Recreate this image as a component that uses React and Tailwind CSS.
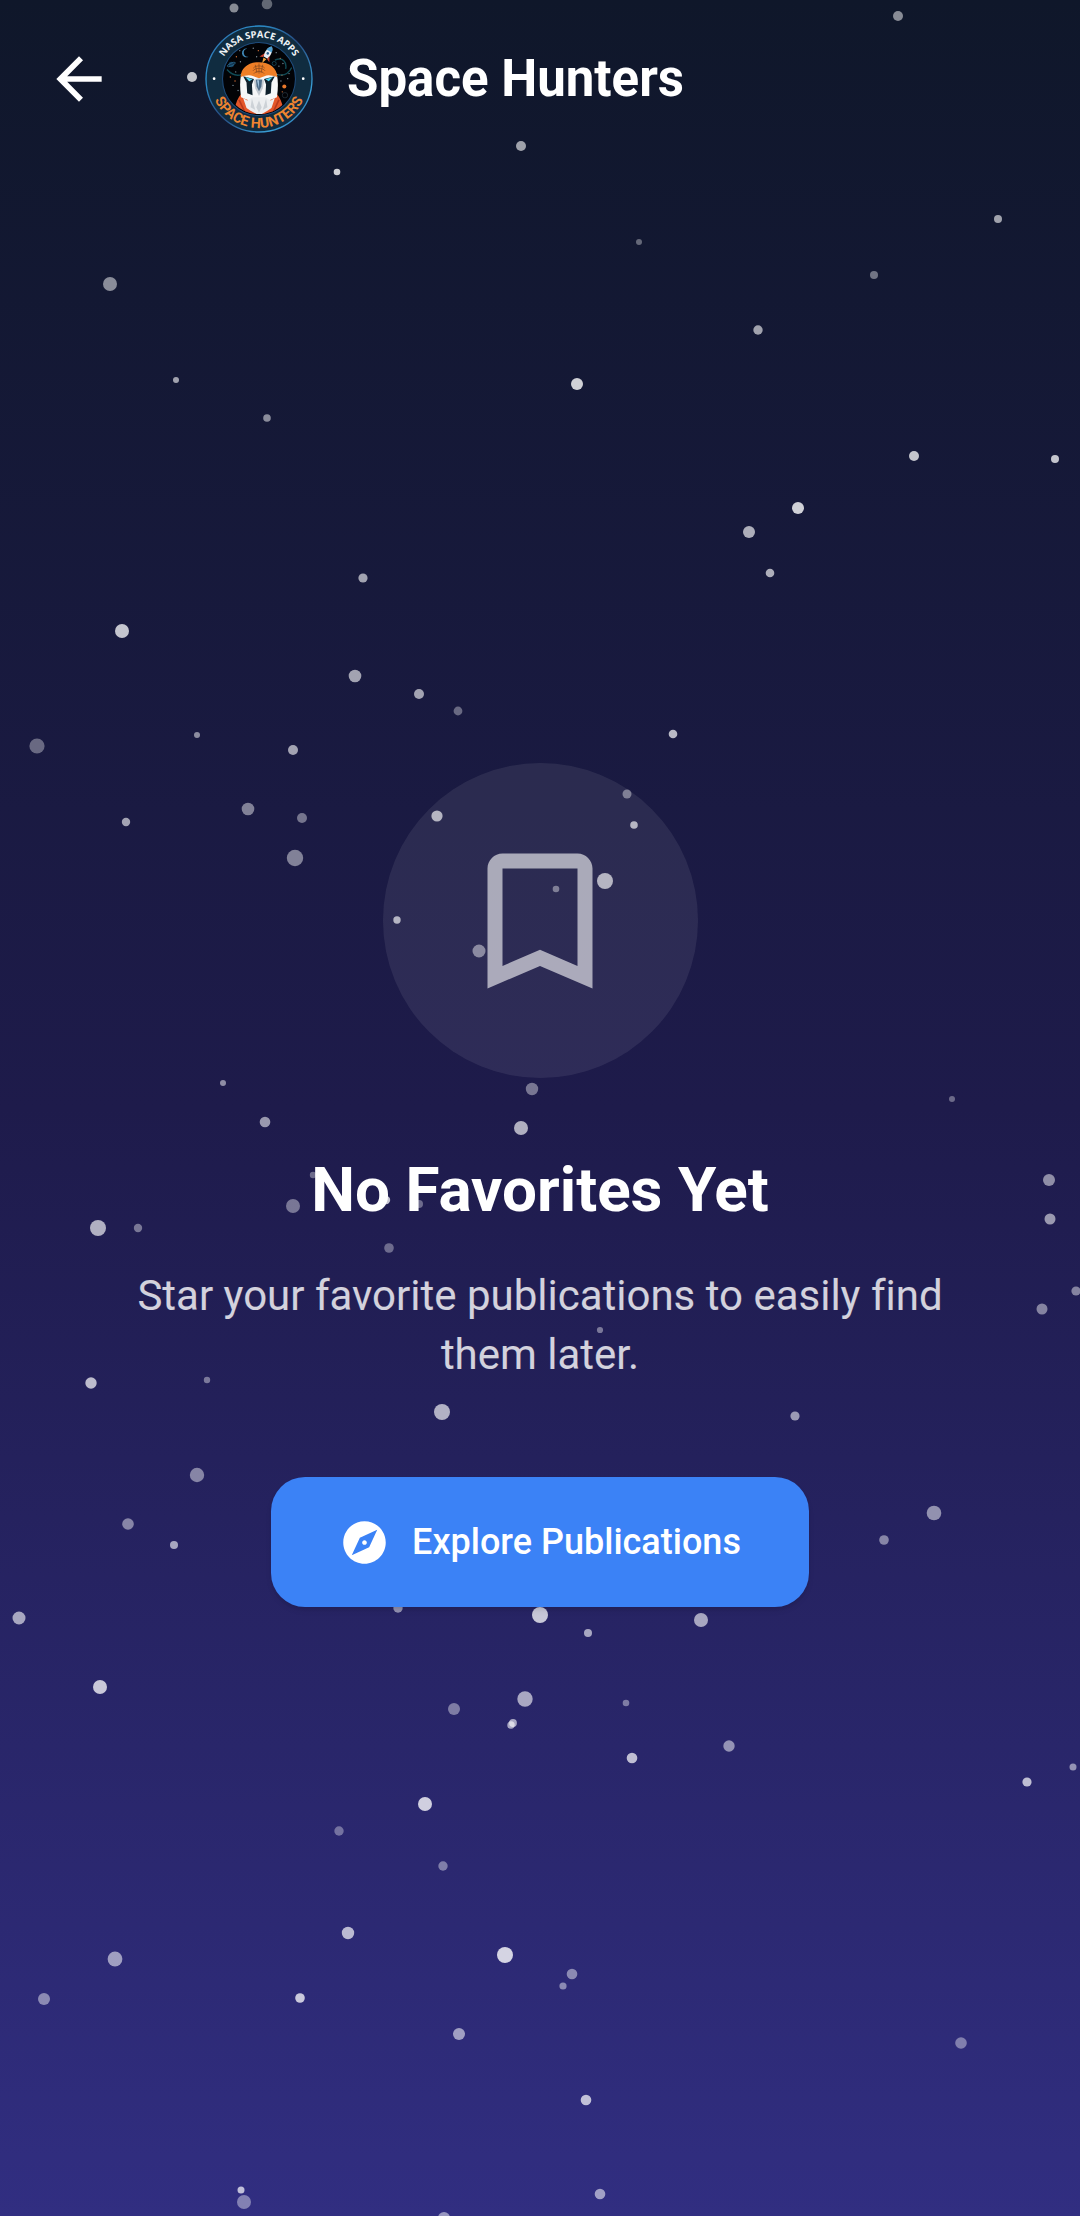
import React from "react";

// Star data: [x, y, radius, opacity] on a 1080 x 2216 sky.
const STARS = [
  [898, 16, 5, 0.5], [998, 219, 4, 0.6], [639, 242, 3, 0.35], [874, 275, 4, 0.4],
  [758, 330, 4.7, 0.6], [577, 384, 6, 0.8], [914, 456, 5, 0.75], [1055, 459, 4, 0.75],
  [798, 508, 6, 0.8], [749, 532, 6, 0.65], [770, 573, 4.3, 0.65], [673, 734, 4.3, 0.7],
  [234, 8, 4.5, 0.5], [267, 4, 5.3, 0.35], [192, 77, 5, 0.75], [337, 172, 3.3, 0.8],
  [521, 146, 5, 0.6], [110, 284, 7, 0.5], [176, 380, 3, 0.6], [267, 418, 3.8, 0.5],
  [363, 578, 4.6, 0.6], [122, 631, 7, 0.75], [355, 676, 6.3, 0.6], [419, 694, 5, 0.6],
  [458, 711, 4.4, 0.35], [197, 735, 3, 0.5], [37, 746, 7.6, 0.35], [293, 750, 5, 0.6],
  [248, 809, 6.3, 0.45], [302, 818, 5, 0.4], [126, 822, 4.2, 0.6], [437, 816, 5.6, 0.65],
  [295, 858, 8.2, 0.45], [627, 794, 4.5, 0.4], [634, 825, 3.8, 0.65], [605, 881, 8, 0.65],
  [556, 889, 3.3, 0.4], [397, 920, 3.7, 0.65], [479, 951, 6.5, 0.45], [532, 1089, 6.2, 0.4],
  [521, 1128, 7, 0.65], [223, 1083, 3, 0.5], [265, 1122, 5.3, 0.55], [313, 1175, 3.2, 0.35],
  [293, 1206, 7, 0.4], [386, 1200, 4.2, 0.75], [419, 1204, 4, 0.35], [98, 1228, 8, 0.65],
  [138, 1228, 4.2, 0.4], [389, 1248, 4.8, 0.35], [91, 1383, 5.7, 0.7], [207, 1380, 3.2, 0.4],
  [442, 1412, 8, 0.65], [197, 1475, 7.2, 0.45], [128, 1524, 5.8, 0.45], [174, 1545, 4, 0.6],
  [19, 1618, 6.5, 0.6], [398, 1608, 4.7, 0.5], [540, 1615, 8, 0.75], [701, 1620, 7, 0.6],
  [588, 1633, 4, 0.6], [952, 1099, 3, 0.35], [1049, 1180, 6, 0.5], [1050, 1219, 5.5, 0.55],
  [1076, 1291, 4.6, 0.45], [1042, 1309, 5.5, 0.45], [600, 1330, 3.1, 0.4], [795, 1416, 4.6, 0.55],
  [934, 1513, 7.3, 0.5], [884, 1540, 4.8, 0.45], [100, 1687, 7, 0.75], [454, 1709, 6, 0.4],
  [525, 1699, 7.7, 0.6], [513, 1723, 3.9, 0.6], [511, 1725, 3.7, 0.6], [425, 1804, 7, 0.78],
  [339, 1831, 4.7, 0.35], [443, 1866, 4.7, 0.4], [348, 1933, 6.2, 0.68], [115, 1959, 7.4, 0.55],
  [505, 1955, 8, 0.8], [44, 1999, 6, 0.45], [300, 1998, 4.8, 0.75], [459, 2034, 6, 0.55],
  [241, 2190, 3.5, 0.7], [244, 2202, 7, 0.4], [444, 2218, 6, 0.5], [626, 1703, 3.3, 0.4],
  [729, 1746, 5.7, 0.5], [632, 1758, 5.3, 0.7], [1073, 1767, 3.5, 0.5], [1027, 1782, 4.6, 0.7],
  [572, 1974, 5.3, 0.45], [563, 1986, 3.6, 0.45], [961, 2043, 5.8, 0.4], [586, 2100, 5.3, 0.7],
  [600, 2194, 5.3, 0.55],
];

function Starfield() {
  return (
    <svg
      aria-hidden="true"
      viewBox="0 0 1080 2216"
      preserveAspectRatio="xMidYMid slice"
      className="pointer-events-none absolute inset-0 h-full w-full"
    >
      {STARS.map(([x, y, r, o]) => (
        <circle key={`${x}-${y}`} cx={x} cy={y} r={r} fill="#fff" fillOpacity={o} />
      ))}
    </svg>
  );
}

const DUST = [
  [140, 140], [150, 122], [190, 115], [205, 122], [200, 140], [258, 128], [270, 145],
  [278, 160], [138, 185], [122, 200], [130, 225], [145, 240], [275, 195], [272, 212],
  [292, 205], [276, 244], [152, 155], [266, 168], [136, 212], [296, 190],
];

function TeamLogo({ className }) {
  return (
    <svg role="img" aria-label="Space Hunters team badge" viewBox="47 46 320 320" className={className}>
      <defs>
        <linearGradient id="rim" x1="0" y1="0" x2="1" y2="1">
          <stop offset="0" stopColor="#2f5f9e" />
          <stop offset="0.25" stopColor="#2c8fcb" />
          <stop offset="0.5" stopColor="#264a80" />
          <stop offset="0.8" stopColor="#3aa0d8" />
          <stop offset="1" stopColor="#274f8a" />
        </linearGradient>
        <clipPath id="porthole">
          <circle cx="207" cy="206" r="104" />
        </clipPath>
        <path id="arcTop" d="M 84 206 A 123 123 0 0 1 330 206" />
        <path id="arcBottom" d="M 62 206 A 145 145 0 0 0 352 206" />
      </defs>
      <circle cx="207" cy="206" r="157" fill="#102c40" stroke="url(#rim)" strokeWidth="4" />
      <circle cx="207" cy="206" r="108" fill="#020306" stroke="#1f4c7c" strokeWidth="3" />
      <g clipPath="url(#porthole)">
        {DUST.map(([x, y], i) => (
          <circle key={i} cx={x} cy={y} r="2" fill={i % 3 === 0 ? "#d9743a" : "#7d8f9c"} />
        ))}
        <path d="M172 116a13 13 0 1 0 4 24a12 12 0 0 1-4-24z" fill="#3f87b5" />
        <circle cx="125" cy="163" r="8" fill="#123a56" />
        <ellipse cx="125" cy="163" rx="13" ry="4" fill="none" stroke="#2f6f98" strokeWidth="2" transform="rotate(-25 125 163)" />
        <circle cx="252" cy="160" r="6" fill="none" stroke="#1f5a6b" strokeWidth="2" />
        <circle cx="282" cy="228" r="6" fill="#e9792b" />
        <circle cx="284" cy="254" r="8" fill="none" stroke="#2c3b47" strokeWidth="2" />
        <path d="M112 178c14 16 30 20 46 14M304 172c-10 20-26 26-46 20M254 150c24-10 36 6 32 26" fill="none" stroke="#176a78" strokeWidth="4" opacity="0.7" />

        {/* shoulders */}
        <path d="M156 248c-12 14-18 28-20 44l40 20h62l40-20c-2-16-8-30-20-44z" fill="#e4572a" />
        <path d="M148 268l18 38M266 268l-18 38" stroke="#b8391d" strokeWidth="5" />
        {/* head */}
        <path d="M154 192c-4 20-4 42 0 68l20 8h66l20-8c4-26 4-48 0-68c-10-20-96-20-106 0z" fill="#f6f7f8" />
        {/* chest feathers */}
        <path d="M160 262l12 8l16-10h38l16 10l12-8l-10 30l-12 8l-24 14l-26-14l-12-8z" fill="#eceef0" />
        <path d="M186 264l10 34l-14-8zM228 264l-10 34l14-8zM207 270l8 20l-8 16l-8-16z" fill="#cdd2d7" />
        {/* dark eye bands */}
        <path d="M160 198l32 8l-6 16l2 32l-16-6l-2-32z" fill="#0e202c" />
        <path d="M254 198l-32 8l6 16l-2 32l16-6l2-32z" fill="#0e202c" />
        <path d="M166 200l22 7l-10 6zM248 200l-22 7l10 6z" fill="#4fd3ee" />
        {/* crest */}
        <path d="M153 200c0-27 23-44 54-44s54 17 54 44c-16-5-28-8-38-2l-16 6l-16-6c-12-6-24-3-38 2z" fill="#ee7f27" />
        <g fill="none" stroke="#7d451f" strokeWidth="2">
          <path d="M190 174c6-9 28-9 34 0M189 182c6-10 30-10 36 0M192 190c6-9 24-9 30 0M207 160v30M196 164l5 24M218 164l-5 24" />
        </g>
        {/* beak */}
        <path d="M192 212c4-10 26-10 30 0l-4 22l-11 22l-11-22z" fill="#c3cad1" />
        <path d="M198 208h18l-2 20l-7 14l-7-14z" fill="#4d6c88" />
        <path d="M201 210h6v24z" fill="#9fc0da" />
        {/* rocket */}
        <g transform="rotate(30 232 132)">
          <path d="M232 106c10 8 11 26 7 38h-14c-4-12-3-30 7-38z" fill="#e8edf2" />
          <path d="M232 106c6 4 8 10 9 16h-18c1-6 3-12 9-16z" fill="#4d9fd0" />
          <circle cx="232" cy="130" r="4" fill="#2b5f8c" />
          <path d="M224 134l-9 16l10-4zM240 134l9 16l-10-4z" fill="#cf3f28" />
          <path d="M227 147h10l-5 16z" fill="#f2a23c" />
        </g>
      </g>
      <circle cx="74" cy="205" r="4" fill="#fff" />
      <circle cx="338" cy="205" r="4" fill="#fff" />
      <text fill="#eef2f5" fontFamily="'Open Sans', sans-serif" fontWeight="700" fontSize="28" textAnchor="middle">
        <textPath href="#arcTop" startOffset="50%">NASA SPACE APPS</textPath>
      </text>
      <text fill="#ee8430" fontFamily="Roboto, sans-serif" fontWeight="700" fontSize="42" textAnchor="middle">
        <textPath href="#arcBottom" startOffset="50%">SPACE HUNTERS</textPath>
      </text>
    </svg>
  );
}

function ArrowBackIcon({ className }) {
  return (
    <svg aria-hidden="true" viewBox="0 0 24 24" fill="currentColor" className={className}>
      <path d="M20 11H7.83l5.59-5.59L12 4l-8 8 8 8 1.41-1.41L7.83 13H20v-2z" />
    </svg>
  );
}

function BookmarkIcon({ className }) {
  return (
    <svg aria-hidden="true" viewBox="0 0 24 24" fill="currentColor" className={className}>
      <path d="M17 3H7c-1.1 0-2 .9-2 2v16l7-3 7 3V5c0-1.1-.9-2-2-2zm0 15-5-2.18L7 18V5h10v13z" />
    </svg>
  );
}

function ExploreIcon({ className }) {
  return (
    <svg aria-hidden="true" viewBox="0 0 24 24" fill="currentColor" className={className}>
      <path d="M12 10.9c-.61 0-1.1.49-1.1 1.1s.49 1.1 1.1 1.1c.61 0 1.1-.49 1.1-1.1s-.49-1.1-1.1-1.1zM12 2C6.48 2 2 6.48 2 12s4.48 10 10 10 10-4.48 10-10S17.52 2 12 2zm2.19 12.19L6 18l3.81-8.19L18 6l-3.81 8.19z" />
    </svg>
  );
}

export default function App() {
  return (
    <div className="relative flex min-h-screen flex-col overflow-hidden bg-linear-to-b/srgb from-[#0f172a] via-[#1e1b4b] to-[#312e81] font-[Roboto,sans-serif] text-white [font-variant-ligatures:none]">
      <Starfield />
      <header className="relative flex h-[158px] items-center pl-[45px]">
        <button type="button" aria-label="Back" className="shrink-0">
          <ArrowBackIcon className="size-[68px]" />
        </button>
        <TeamLogo className="ml-[92px] size-[108px] shrink-0" />
        <h1 className="ml-[34px] text-[51px] leading-[60px] font-bold">Space Hunters</h1>
      </header>
      <main className="relative flex grow flex-col items-center justify-center px-[90px] pb-1 text-center">
        <div className="flex size-[315px] items-center justify-center rounded-full bg-white/[0.08]">
          <BookmarkIcon className="size-[180px] text-white/60" />
        </div>
        <h2 className="mt-[72px] text-[62px] leading-[80px] font-bold">No Favorites Yet</h2>
        <p className="mt-9 max-w-[860px] text-[42px] leading-[59px] text-white/80">
          Star your favorite publications to easily find them later.
        </p>
        <button
          type="button"
          className="mt-[93px] flex h-[130px] items-center gap-[22px] rounded-[34px] bg-[#3b82f6] px-[68px] text-[36px] font-medium shadow-md"
        >
          <ExploreIcon className="size-[51px]" />
          Explore Publications
        </button>
      </main>
    </div>
  );
}
